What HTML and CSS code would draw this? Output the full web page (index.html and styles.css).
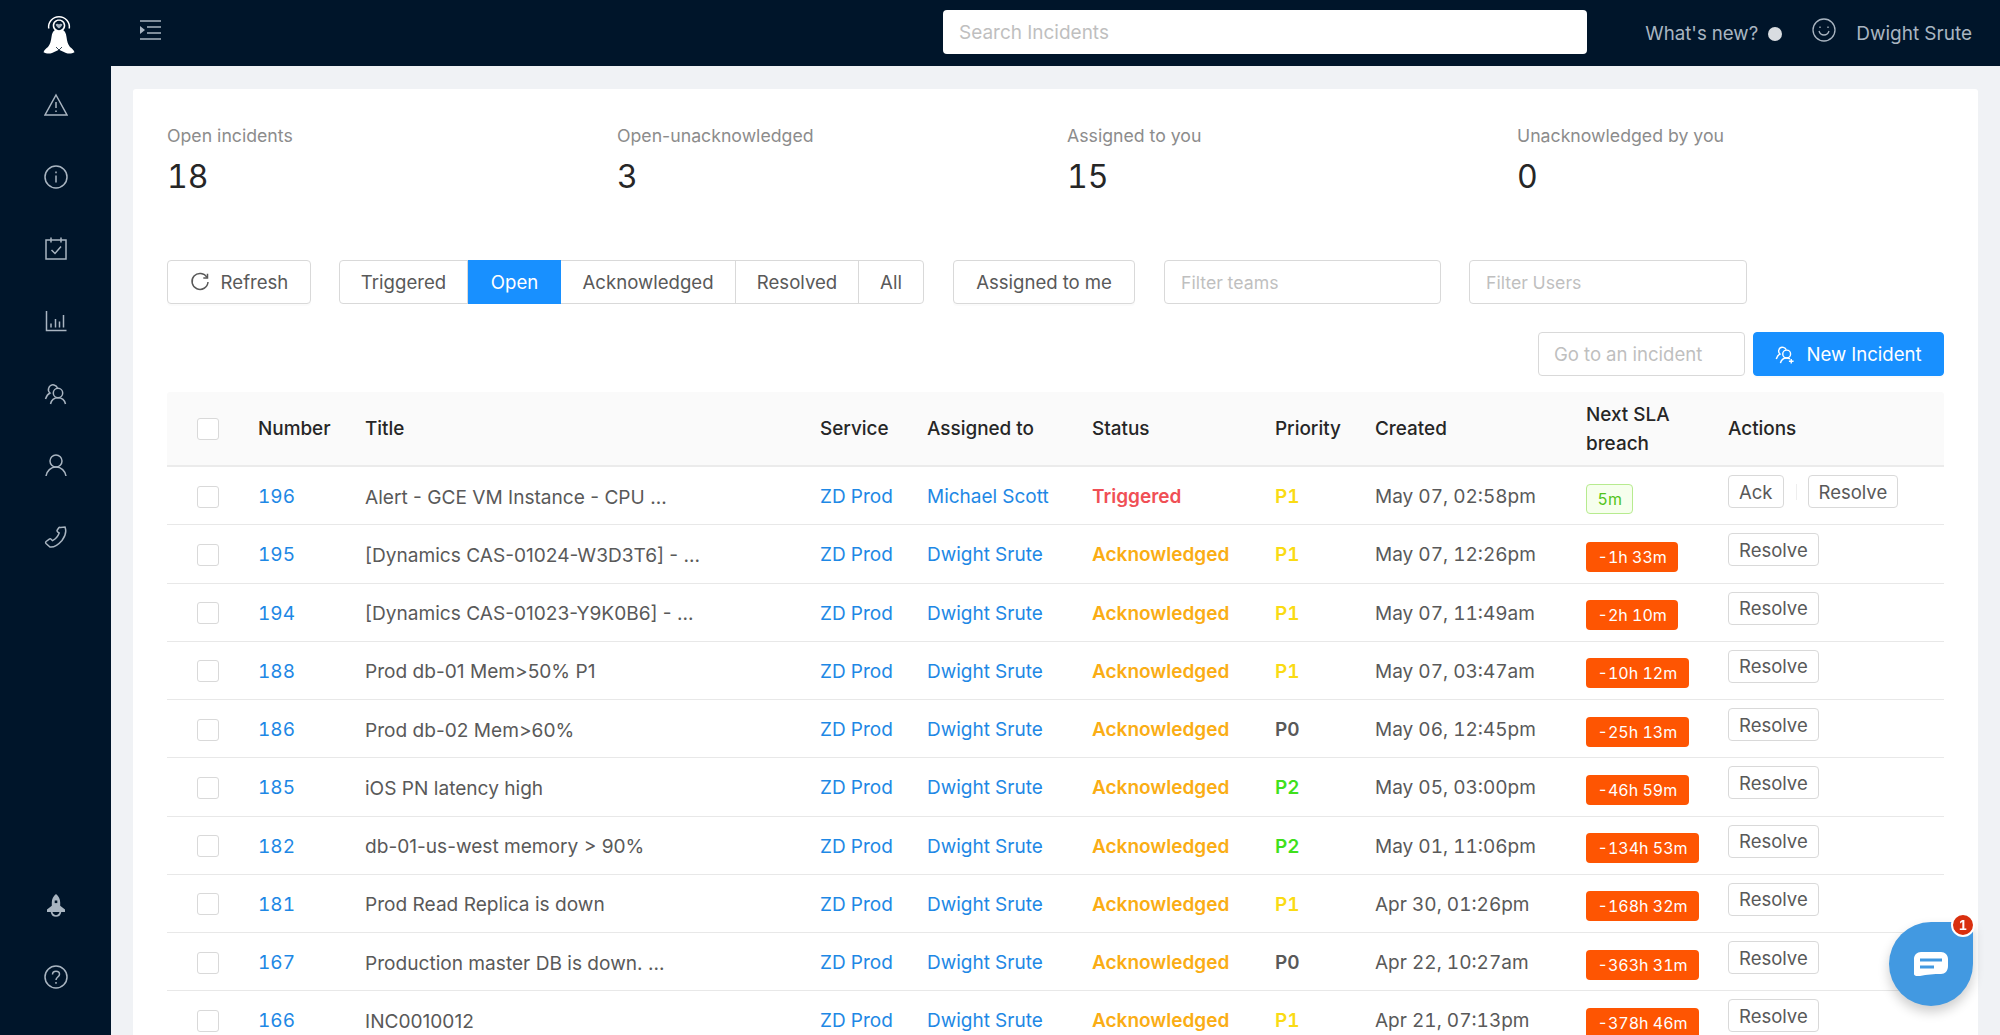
FILE: index.html
```html
<!DOCTYPE html>
<html lang="en">
<head>
<meta charset="utf-8">
<title>Incidents</title>
<link rel="stylesheet" href="styles.css">
</head>
<body>
<div class="app">
  <aside class="sidebar">
    <div class="logo">
      <svg width="32" height="41" viewBox="0 0 32 41">
        <path d="M5.700 14.500a10.400 10.400 0 1 1 20.600 0" fill="none" stroke="#fff" stroke-width="1.500"/>
        <path d="M16 5.500c3.800 0 6.300 2.600 6.300 6 0 2-.8 3.700-2 4.800 1.800 1 2.700 3.200 3.200 6.700.5 4 1.300 7.300 3.500 10 1.800 1.500 3.600 2.700 4.500 5.300-2.700 1.500-6 1.500-8.500.7L16 35.700 9 39c-2.500.8-5.800.8-8.500-.7.9-2.600 2.700-3.800 4.500-5.300 2.200-2.700 3-6 3.500-10 .5-3.500 1.400-5.700 3.200-6.700-1.200-1.100-2-2.800-2-4.800 0-3.400 2.500-6 6.300-6z" fill="#fff"/>
        <circle cx="16" cy="11.500" r="4.700" fill="#00152a"/>
        <path d="M12.800 10.300c1-1 2.200-.8 3.200.2 1-1 2.200-1.200 3.200-.2.500 1.200-1.500 3-3.200 4.200-1.700-1.200-3.700-3-3.200-4.200z" fill="#a9b5c1"/>
        <path d="M16 36l-3-3M16 36l3-3" stroke="#00152a" stroke-width=".8" fill="none"/>
      </svg>
    </div>
    <nav class="nav">
      <a class="nav-item"><svg width="24" height="24" viewBox="0 0 24 24" class="ico"><path d="M12 2 L23 22 H1 Z"/><path d="M12 9v6M12 17.500v1.500"/></svg></a>
      <a class="nav-item"><svg width="24" height="24" viewBox="0 0 24 24" class="ico"><circle cx="12" cy="12" r="11"/><path d="M12 10.500v7M12 6.500v1.800"/></svg></a>
      <a class="nav-item"><svg width="24" height="24" viewBox="0 0 24 24" class="ico"><rect x="2" y="3" width="20" height="19"/><path d="M7 0.500v5M17 0.500v5M7.500 13l3.500 3.500 6-7"/></svg></a>
      <a class="nav-item"><svg width="24" height="24" viewBox="0 0 24 24" class="ico"><path d="M2.500 2v19.500h20M7 14.500v4M11.500 10v8.500M15.500 12.500v6M19.500 6v12.500"/></svg></a>
      <a class="nav-item"><svg width="24" height="24" viewBox="0 0 24 24" class="ico"><path d="M1.500 18c1-3 2.300-5 4.500-6-1.500-1.300-2-3-1.300-5C5.500 4.500 8 3.500 10 4c1.700.4 3 1.600 3.500 3"/><circle cx="14" cy="12" r="4.700"/><path d="M6.500 23c.8-3.700 3.700-6.300 7.500-6.300s6.700 2.600 7.500 6.300"/></svg></a>
      <a class="nav-item"><svg width="24" height="24" viewBox="0 0 24 24" class="ico"><circle cx="12" cy="8" r="6"/><path d="M2 23c.8-5 4.800-9 10-9s9.200 4 10 9"/></svg></a>
      <a class="nav-item"><svg width="24" height="24" viewBox="0 0 24 24" class="ico"><path d="M16.500 2.500l4.500-.5c1.500 4 .5 9-3 13.500-3.500 4-8 7-12 6.500l-4-3.500c-.6-.6-.5-1.500.1-2l3.200-2.400c.6-.4 1.300-.3 1.800.2l1.400 1.400c2.800-1.500 5.500-4.500 6.700-7.700l-1.600-1.200c-.5-.4-.7-1.200-.3-1.800l1.500-2.200c.3-.4.700-.6 1.200-.3z"/></svg></a>
    </nav>
    <div class="nav-bottom">
      <a class="nav-item"><svg width="24" height="24" viewBox="0 0 24 24"><path d="M12 1c2.700 2 4.200 5 4.200 8.500v3.300l4.800 3.700v2.500H3v-2.500l4.800-3.700V9.500C7.800 6 9.300 3 12 1z" fill="#a9b5c1"/><rect x="10.700" y="7.500" width="2.600" height="2.600" fill="#001529"/><path d="M7.500 18.500c.5 2.800 2.300 4.500 4.500 4.500s4-1.700 4.500-4.500" fill="none" stroke="#a9b5c1" stroke-width="1.700"/></svg></a>
      <a class="nav-item"><svg width="24" height="24" viewBox="0 0 24 24" class="ico"><circle cx="12" cy="12" r="11"/><path d="M8.500 9.500c0-2 1.500-3.300 3.500-3.300s3.500 1.300 3.500 3c0 2.800-3.500 2.800-3.500 5.800M12 17v1.800"/></svg></a>
    </div>
  </aside>
  <div class="main">
    <header class="topbar">
      <svg class="toggle" width="22" height="20" viewBox="0 0 22 20"><path d="M0 1h21M7 7h14M7 13h14M0 19h21" fill="none" stroke="#a9b5c1" stroke-width="1.600"/><path d="M0 6l5 4-5 4z" fill="#a9b5c1"/></svg>
      <div class="top-search">Search Incidents</div>
      <div class="top-right">
        <span class="whats-new">What's new?</span>
        <span class="dot"></span>
        <svg class="smile" width="24" height="24" viewBox="0 0 24 24"><circle cx="12" cy="12" r="11"/><path d="M7 13c.8 2.700 2.700 4 5 4s4.200-1.300 5-4M8 8.500v1.400M16 8.500v1.400"/></svg>
        <span class="user">Dwight Srute</span>
      </div>
    </header>
    <main class="content">
      <section class="card">
        <div class="stats">
          <div class="stat"><div class="stat-label">Open incidents</div><div class="stat-value">18</div></div>
          <div class="stat"><div class="stat-label">Open-unacknowledged</div><div class="stat-value">3</div></div>
          <div class="stat"><div class="stat-label">Assigned to you</div><div class="stat-value">15</div></div>
          <div class="stat"><div class="stat-label">Unacknowledged by you</div><div class="stat-value">0</div></div>
        </div>
        <div class="filters">
          <button class="btn refresh"><svg width="20" height="20" viewBox="0 0 20 20" fill="none" stroke="#595959" stroke-width="1.500"><path d="M17 5.500A8 8 0 1 0 18 10"/><path d="M17.500 1.800v4.200h-4.200"/></svg>Refresh</button>
          <div class="segments">
            <span class="seg seg-triggered">Triggered</span>
            <span class="seg seg-open">Open</span>
            <span class="seg seg-ack">Acknowledged</span>
            <span class="seg seg-resolved">Resolved</span>
            <span class="seg seg-all">All</span>
          </div>
          <button class="btn assigned">Assigned to me</button>
          <div class="input filter-teams">Filter teams</div>
          <div class="input filter-users">Filter Users</div>
        </div>
        <div class="tools">
          <div class="input goto">Go to an incident</div>
          <button class="btn primary"><svg width="20" height="20" viewBox="0 0 24 24" fill="none" stroke="#fff" stroke-width="1.700"><path d="M1.500 18c1-3 2.300-5 4.500-6-1.500-1.300-2-3-1.300-5C5.500 4.500 8 3.500 10 4c1.700.4 3 1.600 3.500 3"/><circle cx="14" cy="12" r="4.700"/><path d="M6.500 23c.8-3.700 3.700-6.300 7.500-6.300 1.500 0 2.800.4 4 1.100M19.500 18v5.500M16.700 20.700h5.600"/></svg>New Incident</button>
        </div>
        <div class="table">
          <div class="row head">
            <div class="cell"><span class="check"></span></div>
            <div class="cell">Number</div>
            <div class="cell">Title</div>
            <div class="cell">Service</div>
            <div class="cell">Assigned to</div>
            <div class="cell">Status</div>
            <div class="cell">Priority</div>
            <div class="cell">Created</div>
            <div class="cell sla-head">Next SLA breach</div>
            <div class="cell">Actions</div>
          </div>
          <div class="row">
            <div class="cell"><span class="check"></span></div><a class="cell link">196</a><div class="cell title">Alert - GCE VM Instance - CPU ...</div><a class="cell link">ZD Prod</a><a class="cell link">Michael Scott</a><div class="cell st-trig">Triggered</div><div class="cell p1">P1</div><div class="cell">May 07, 02:58pm</div><div class="cell"><span class="tag ok">5m</span></div><div class="cell"><button class="act">Ack</button><i class="sep"></i><button class="act">Resolve</button></div>
          </div>
          <div class="row">
            <div class="cell"><span class="check"></span></div><a class="cell link">195</a><div class="cell title">[Dynamics CAS-01024-W3D3T6] - ...</div><a class="cell link">ZD Prod</a><a class="cell link">Dwight Srute</a><div class="cell st-ack">Acknowledged</div><div class="cell p1">P1</div><div class="cell">May 07, 12:26pm</div><div class="cell"><span class="tag late">-1h 33m</span></div><div class="cell"><button class="act">Resolve</button></div>
          </div>
          <div class="row">
            <div class="cell"><span class="check"></span></div><a class="cell link">194</a><div class="cell title">[Dynamics CAS-01023-Y9K0B6] - ...</div><a class="cell link">ZD Prod</a><a class="cell link">Dwight Srute</a><div class="cell st-ack">Acknowledged</div><div class="cell p1">P1</div><div class="cell">May 07, 11:49am</div><div class="cell"><span class="tag late">-2h 10m</span></div><div class="cell"><button class="act">Resolve</button></div>
          </div>
          <div class="row">
            <div class="cell"><span class="check"></span></div><a class="cell link">188</a><div class="cell title">Prod db-01 Mem&gt;50% P1</div><a class="cell link">ZD Prod</a><a class="cell link">Dwight Srute</a><div class="cell st-ack">Acknowledged</div><div class="cell p1">P1</div><div class="cell">May 07, 03:47am</div><div class="cell"><span class="tag late">-10h 12m</span></div><div class="cell"><button class="act">Resolve</button></div>
          </div>
          <div class="row">
            <div class="cell"><span class="check"></span></div><a class="cell link">186</a><div class="cell title">Prod db-02 Mem&gt;60%</div><a class="cell link">ZD Prod</a><a class="cell link">Dwight Srute</a><div class="cell st-ack">Acknowledged</div><div class="cell p0">P0</div><div class="cell">May 06, 12:45pm</div><div class="cell"><span class="tag late">-25h 13m</span></div><div class="cell"><button class="act">Resolve</button></div>
          </div>
          <div class="row">
            <div class="cell"><span class="check"></span></div><a class="cell link">185</a><div class="cell title">iOS PN latency high</div><a class="cell link">ZD Prod</a><a class="cell link">Dwight Srute</a><div class="cell st-ack">Acknowledged</div><div class="cell p2">P2</div><div class="cell">May 05, 03:00pm</div><div class="cell"><span class="tag late">-46h 59m</span></div><div class="cell"><button class="act">Resolve</button></div>
          </div>
          <div class="row">
            <div class="cell"><span class="check"></span></div><a class="cell link">182</a><div class="cell title">db-01-us-west memory &gt; 90%</div><a class="cell link">ZD Prod</a><a class="cell link">Dwight Srute</a><div class="cell st-ack">Acknowledged</div><div class="cell p2">P2</div><div class="cell">May 01, 11:06pm</div><div class="cell"><span class="tag late">-134h 53m</span></div><div class="cell"><button class="act">Resolve</button></div>
          </div>
          <div class="row">
            <div class="cell"><span class="check"></span></div><a class="cell link">181</a><div class="cell title">Prod Read Replica is down</div><a class="cell link">ZD Prod</a><a class="cell link">Dwight Srute</a><div class="cell st-ack">Acknowledged</div><div class="cell p1">P1</div><div class="cell">Apr 30, 01:26pm</div><div class="cell"><span class="tag late">-168h 32m</span></div><div class="cell"><button class="act">Resolve</button></div>
          </div>
          <div class="row">
            <div class="cell"><span class="check"></span></div><a class="cell link">167</a><div class="cell title">Production master DB is down. ...</div><a class="cell link">ZD Prod</a><a class="cell link">Dwight Srute</a><div class="cell st-ack">Acknowledged</div><div class="cell p0">P0</div><div class="cell">Apr 22, 10:27am</div><div class="cell"><span class="tag late">-363h 31m</span></div><div class="cell"><button class="act">Resolve</button></div>
          </div>
          <div class="row">
            <div class="cell"><span class="check"></span></div><a class="cell link">166</a><div class="cell title">INC0010012</div><a class="cell link">ZD Prod</a><a class="cell link">Dwight Srute</a><div class="cell st-ack">Acknowledged</div><div class="cell p1">P1</div><div class="cell">Apr 21, 07:13pm</div><div class="cell"><span class="tag late">-378h 46m</span></div><div class="cell"><button class="act">Resolve</button></div>
          </div>
        </div>
      </section>
    </main>
  </div>
</div>
<div class="chat">
  <svg width="34" height="24" viewBox="0 0 34 24"><path d="M7 0h20c4 0 7 3 7 7v7c0 5-3 8-7 8-7 0-14 .5-21 2-2 .3-6 .3-6-2V7c0-4 3-7 7-7z" fill="#fff"/><path d="M6 8h22M6 15h14" stroke="#4299e1" stroke-width="3"/></svg>
  <span class="badge">1</span>
</div>
</body>
</html>
```

FILE: styles.css
```css
* { box-sizing: border-box; }
html, body { margin: 0; height: 100%; overflow: hidden; }
body {
  font-family: Inter, "Liberation Sans", sans-serif;
  font-size: 19px;
  font-variant-numeric: tabular-nums;
  color: #595959;
  background: #f0f2f5;
}
button { font: inherit; color: inherit; cursor: pointer; }

.app { display: flex; height: 1035px; }

.sidebar {
  width: 111px;
  flex: none;
  background: #00152a;
  display: flex;
  flex-direction: column;
  align-items: center;
}
.logo { height: 66px; padding: 14px 0 0 7px; }
.nav { display: flex; flex-direction: column; padding-top: 3px; }
.nav-item { width: 111px; height: 72px; display: flex; align-items: center; justify-content: center; }
.nav-bottom { margin-top: auto; padding-bottom: 22px; }
.ico { fill: none; stroke: #a9b5c1; stroke-width: 1.500; }

.main { flex: 1; min-width: 0; display: flex; flex-direction: column; }
.topbar {
  height: 66px;
  flex: none;
  background: #00152a;
  display: flex;
  align-items: center;
  padding: 0 28px 0 29px;
}
.toggle { margin-top: -6px; }
.top-search {
  width: 644px;
  height: 44px;
  margin: -2px 0 0 781px;
  background: #fff;
  border-radius: 4px;
  color: #bfbfbf;
  padding: 0 16px;
  display: flex;
  align-items: center;
}
.top-right { margin-left: auto; display: flex; align-items: center; color: #a9b5c1; }
.whats-new { font-size: 18.7px; }
.dot { width: 14px; height: 14px; border-radius: 50%; background: #d9dde1; margin: 2px 0 0 10px; }
.smile { fill: none; stroke: #a9b5c1; stroke-width: 1.300; margin: -6px 0 0 30px; }
.user { margin-left: 20px; }

.content { flex: 1; min-height: 0; padding: 23px 22px 0; overflow: hidden; }
.card { background: #fff; border-radius: 3px; padding: 35px 34px 0; height: 1100px; }

.stats { display: grid; grid-template-columns: repeat(4, 450px); height: 136px; }
.stat-label { color: #8c8c8c; font-size: 17.7px; line-height: 24px; font-variant-numeric: normal; }
.stat-value { color: #262626; font-size: 32px; line-height: 44px; margin-top: 7px; }

.filters { display: flex; align-items: center; height: 44px; font-size: 18.6px; }
.btn {
  height: 44px;
  background: #fff;
  border: 1px solid #d9d9d9;
  border-radius: 4px;
  display: flex;
  align-items: center;
  justify-content: center;
  padding: 0;
  box-shadow: 0 2px 0 rgba(0,0,0,.015);
}
.refresh { width: 144px; gap: 11px; }
.segments { display: flex; height: 44px; margin-left: 28px; width: 585px; border: 1px solid #d9d9d9; border-radius: 4px; background: #fff; }
.seg { display: flex; align-items: center; justify-content: center; border-right: 1px solid #d9d9d9; }
.seg-triggered { width: 128px; }
.seg-open { width: 93px; background: #1890ff; color: #fff; border-right: 0; margin: -1px 0; }
.seg-ack { width: 175px; }
.seg-resolved { width: 123px; }
.seg-all { flex: 1; border-right: 0; }
.assigned { width: 182px; margin-left: 29px; }
.input {
  height: 44px;
  background: #fff;
  border: 1px solid #d9d9d9;
  border-radius: 4px;
  color: #bfbfbf;
  padding: 0 16px;
  display: flex;
  align-items: center;
}
.filter-teams { width: 277px; margin-left: 29px; font-size: 17.7px; }
.filter-users { width: 278px; margin-left: 28px; font-size: 17.7px; }

.tools { display: flex; justify-content: flex-end; gap: 8px; margin-top: 28px; font-size: 18.6px; }
.goto { width: 207px; padding: 0 15px; }
.primary { width: 191px; background: #1890ff; border-color: #1890ff; color: #fff; gap: 11px; }

.table { margin-top: 16px; }
.row {
  display: grid;
  grid-template-columns: 91px 107px 455px 107px 165px 183px 100px 211px 142px 1fr;
  height: 58.25px;
  border-bottom: 1px solid #e8e8e8;
}
.row.head { height: 75px; background: #fafafa; color: #262626; font-weight: 500; font-size: 18.9px; line-height: 29px; border-bottom: 2px solid #ebebeb; border-radius: 3px 3px 0 0; }
.cell { display: flex; align-items: center; min-width: 0; white-space: nowrap; padding-top: 2px; }
.head .cell { padding-top: 0; }
.cell:first-child { padding-left: 30px; }
.title { font-size: 19.1px; font-variant-numeric: normal; }
.sla-head { white-space: normal; width: 110px; }
.check { width: 22px; height: 22px; background: #fff; border: 1px solid #d9d9d9; border-radius: 3px; }
.link { color: #1e88e5; }
.st-trig { color: #f04f55; font-weight: 600; }
.st-ack { color: #faad14; font-weight: 600; }
.p1 { color: #fadb14; font-weight: 600; }
.p0 { color: #595959; font-weight: 600; }
.p2 { color: #3fe01c; font-weight: 600; }
.tag { font-size: 16px; height: 30px; line-height: 28px; padding: 0 10.5px; border-radius: 4px; margin-top: 4px; border: 1px solid transparent; }
.ok { background: #f6ffed; border-color: #b7eb8f; color: #52c41a; }
.late { background: #fe5502; color: #fff; }
.act { height: 33px; padding: 0 10px; font-size: 18.5px; background: #fff; border: 1px solid #d9d9d9; border-radius: 4px; margin-bottom: 10px; }
.sep { width: 1px; height: 16px; background: #eee; margin: 0 11px 10px 12px; }

.chat {
  position: fixed;
  left: 1889px;
  top: 922px;
  width: 84px;
  height: 84px;
  background: #4299e1;
  border-radius: 50% 0 50% 50%;
  box-shadow: 0 6px 12px rgba(0,0,0,.2);
  display: flex;
  align-items: center;
  justify-content: center;
}
.badge {
  position: absolute;
  top: -9px;
  right: -2px;
  width: 24px;
  height: 24px;
  border-radius: 50%;
  background: #d9300f;
  border: 2px solid #fff;
  color: #fff;
  font-size: 13px;
  font-weight: 700;
  display: flex;
  align-items: center;
  justify-content: center;
}
```
